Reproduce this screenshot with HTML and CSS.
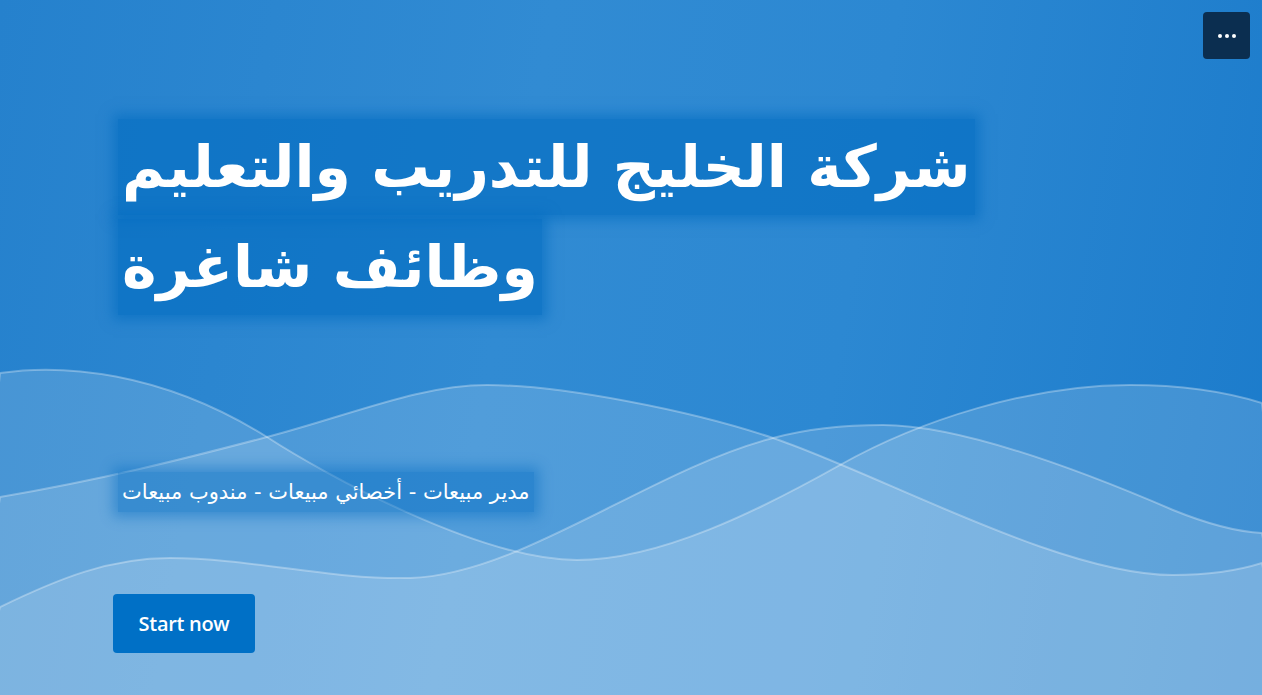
FILE: index.html
```html
<!DOCTYPE html>
<html lang="ar">
<head>
  <meta charset="UTF-8">
  <meta name="viewport" content="width=device-width, initial-scale=1.0">
  <title>شركة الخليج للتدريب والتعليم</title>
  <link rel="stylesheet" href="styles.css">
</head>
<body>
<div class="page">
  <svg class="waves" viewBox="0 0 1262 695" preserveAspectRatio="none" aria-hidden="true">
    <path class="wave" d="M0,373 C60,364 160,370 267,437 C324,474 480,560 577,560 C660,560 760,510 840,465 C920,420 1030,385 1130,385 C1190,385 1230,393 1262,403 L1300,760 L-40,760 Z"/>
    <path class="wave" d="M0,497 C100,480 180,460 267,437 C354,414 420,385 487,385 C560,385 690,410 773,438 C880,474 1060,575 1173,575 C1210,575 1240,570 1262,563 L1300,760 L-40,760 Z"/>
    <path class="wave" d="M0,607 C60,578 110,558 170,558 C250,558 330,580 410,578 C520,575 650,470 773,438 C810,428 850,425 883,425 C960,425 1080,470 1173,510 C1210,525 1240,532 1262,533 L1300,760 L-40,760 Z"/>
  </svg>

  <button class="more-btn" aria-label="More options">
    <span class="dot"></span><span class="dot"></span><span class="dot"></span>
  </button>

  <div class="hero">
    <h1 class="title"><span class="glow">شركة الخليج للتدريب والتعليم وظائف شاغرة</span></h1>
    <p class="subtitle"><span class="glow">مدير مبيعات - أخصائي مبيعات - مندوب مبيعات</span></p>
    <button class="start-btn">Start now</button>
  </div>
</div>
</body>
</html>
```

FILE: styles.css
```css
html, body {
  margin: 0;
  height: 100%;
}
body {
  font-family: "DejaVu Sans", "Liberation Sans", sans-serif;
  overflow: hidden;
}
.page {
  position: relative;
  height: 100vh;
  background: linear-gradient(100deg, #2581cd 0%, #318bd3 40%, #2c88d2 65%, #1b7bcb 100%);
  overflow: hidden;
}
.waves {
  position: absolute;
  left: 0;
  top: 0;
  width: 100%;
  height: 100%;
}
.wave {
  fill: rgba(255, 255, 255, 0.155);
  stroke: rgba(255, 255, 255, 0.3);
  stroke-width: 2;
}
.more-btn {
  position: absolute;
  top: 12px;
  right: 12px;
  width: 47px;
  height: 47px;
  border: 0;
  border-radius: 4px;
  background: #0b2e50;
  display: flex;
  align-items: center;
  justify-content: center;
  gap: 3px;
  padding: 0;
  cursor: pointer;
}
.dot {
  width: 4px;
  height: 4px;
  border-radius: 50%;
  background: #fff;
}
.hero {
  position: relative;
  padding: 117px 0 0 118px;
}
.title {
  margin: 0;
  max-width: 930px;
  font-size: 58.5px;
  font-weight: bold;
  line-height: 100px;
  color: #fff;
}
.glow {
  background: rgba(0, 106, 192, 0.6);
  box-shadow: 0 0 12px 5px rgba(0, 106, 192, 0.6);
  -webkit-box-decoration-break: clone;
  box-decoration-break: clone;
  padding: 14px 4px;
}
.subtitle {
  margin: 153px 0 0;
  font-size: 21px;
  line-height: 45px;
  color: #fff;
}
.subtitle .glow {
  padding: 8px 4px;
  background: rgba(0, 106, 192, 0.45);
  box-shadow: 0 0 12px 5px rgba(0, 106, 192, 0.45);
}
.start-btn {
  margin-top: 79px;
  margin-left: -5px;
  width: 142px;
  height: 59px;
  border: 0;
  border-radius: 4px;
  background: #0070c6;
  color: #fff;
  font-family: "Open Sans", "Noto Sans", sans-serif;
  font-size: 20px;
  font-weight: 600;
  letter-spacing: -0.3px;
  cursor: pointer;
}
```
